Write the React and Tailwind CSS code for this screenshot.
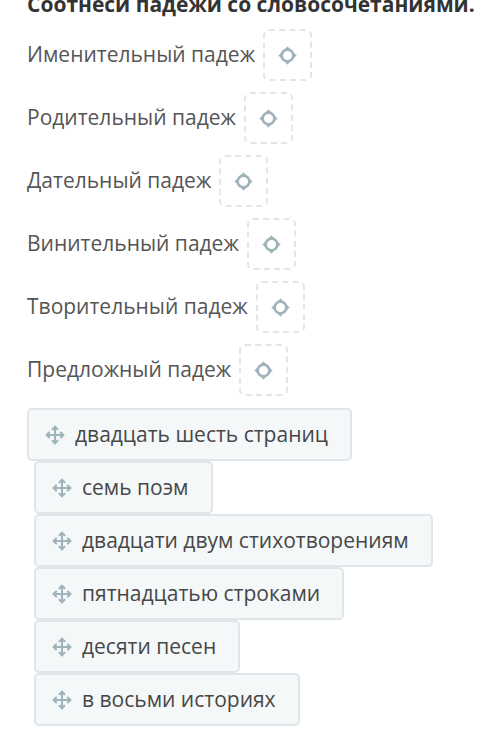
import { Move } from "lucide-react";

const cases = [
  "Именительный падеж",
  "Родительный падеж",
  "Дательный падеж",
  "Винительный падеж",
  "Творительный падеж",
  "Предложный падеж",
];

const phrases = [
  "двадцать шесть страниц",
  "семь поэм",
  "двадцати двум стихотворениям",
  "пятнадцатью строками",
  "десяти песен",
  "в восьми историях",
];

// small ring with four notches, shown inside an empty drop slot
function SlotIcon() {
  return (
    <svg width="21" height="21" viewBox="0 0 20 20" fill="none">
      <circle cx="10" cy="10" r="5.6" stroke="#a0b3bb" strokeWidth="2.6" />
      <path d="M10 1.2 L12.6 4.4 L7.4 4.4 Z" fill="#a0b3bb" />
      <path d="M10 18.8 L12.6 15.6 L7.4 15.6 Z" fill="#a0b3bb" />
      <path d="M1.2 10 L4.4 7.4 L4.4 12.6 Z" fill="#a0b3bb" />
      <path d="M18.8 10 L15.6 7.4 L15.6 12.6 Z" fill="#a0b3bb" />
    </svg>
  );
}

export default function App() {
  return (
    <div
      className="w-[500px] h-[741px] overflow-hidden bg-white px-[27px]"
      style={{ fontFamily: '"Open Sans", "Noto Sans", sans-serif' }}
    >
      <h1 className="-mt-[10px] whitespace-nowrap text-[21px] leading-[28px] font-bold text-[#333]">
        Соотнеси падежи со словосочетаниями.
      </h1>

      <div className="mt-[11px] flex flex-col gap-[11px]">
        {cases.map((c) => (
          <div key={c} className="flex items-center gap-[8px]">
            <span className="text-[21px] text-[#555]">{c}</span>
            <div className="w-[49px] h-[52px] rounded-[6px] border-2 border-dashed border-[#e3e6e8] flex items-center justify-center">
              <SlotIcon />
            </div>
          </div>
        ))}
      </div>

      <div className="mt-[12px] flex flex-col items-start">
        {phrases.map((p, i) => (
          <div
            key={p}
            className={`h-[53px] flex items-center gap-[10px] pl-[16px] pr-[22px] rounded-[5px] border-2 border-[#dfe5e8] bg-[#f4f8f9] ${
              i === 0 ? "" : "ml-[7px]"
            }`}
          >
            <Move size={20} strokeWidth={2.5} color="#9fb3bb" />
            <span className="text-[21px] text-[#474747]">{p}</span>
          </div>
        ))}
      </div>
    </div>
  );
}
